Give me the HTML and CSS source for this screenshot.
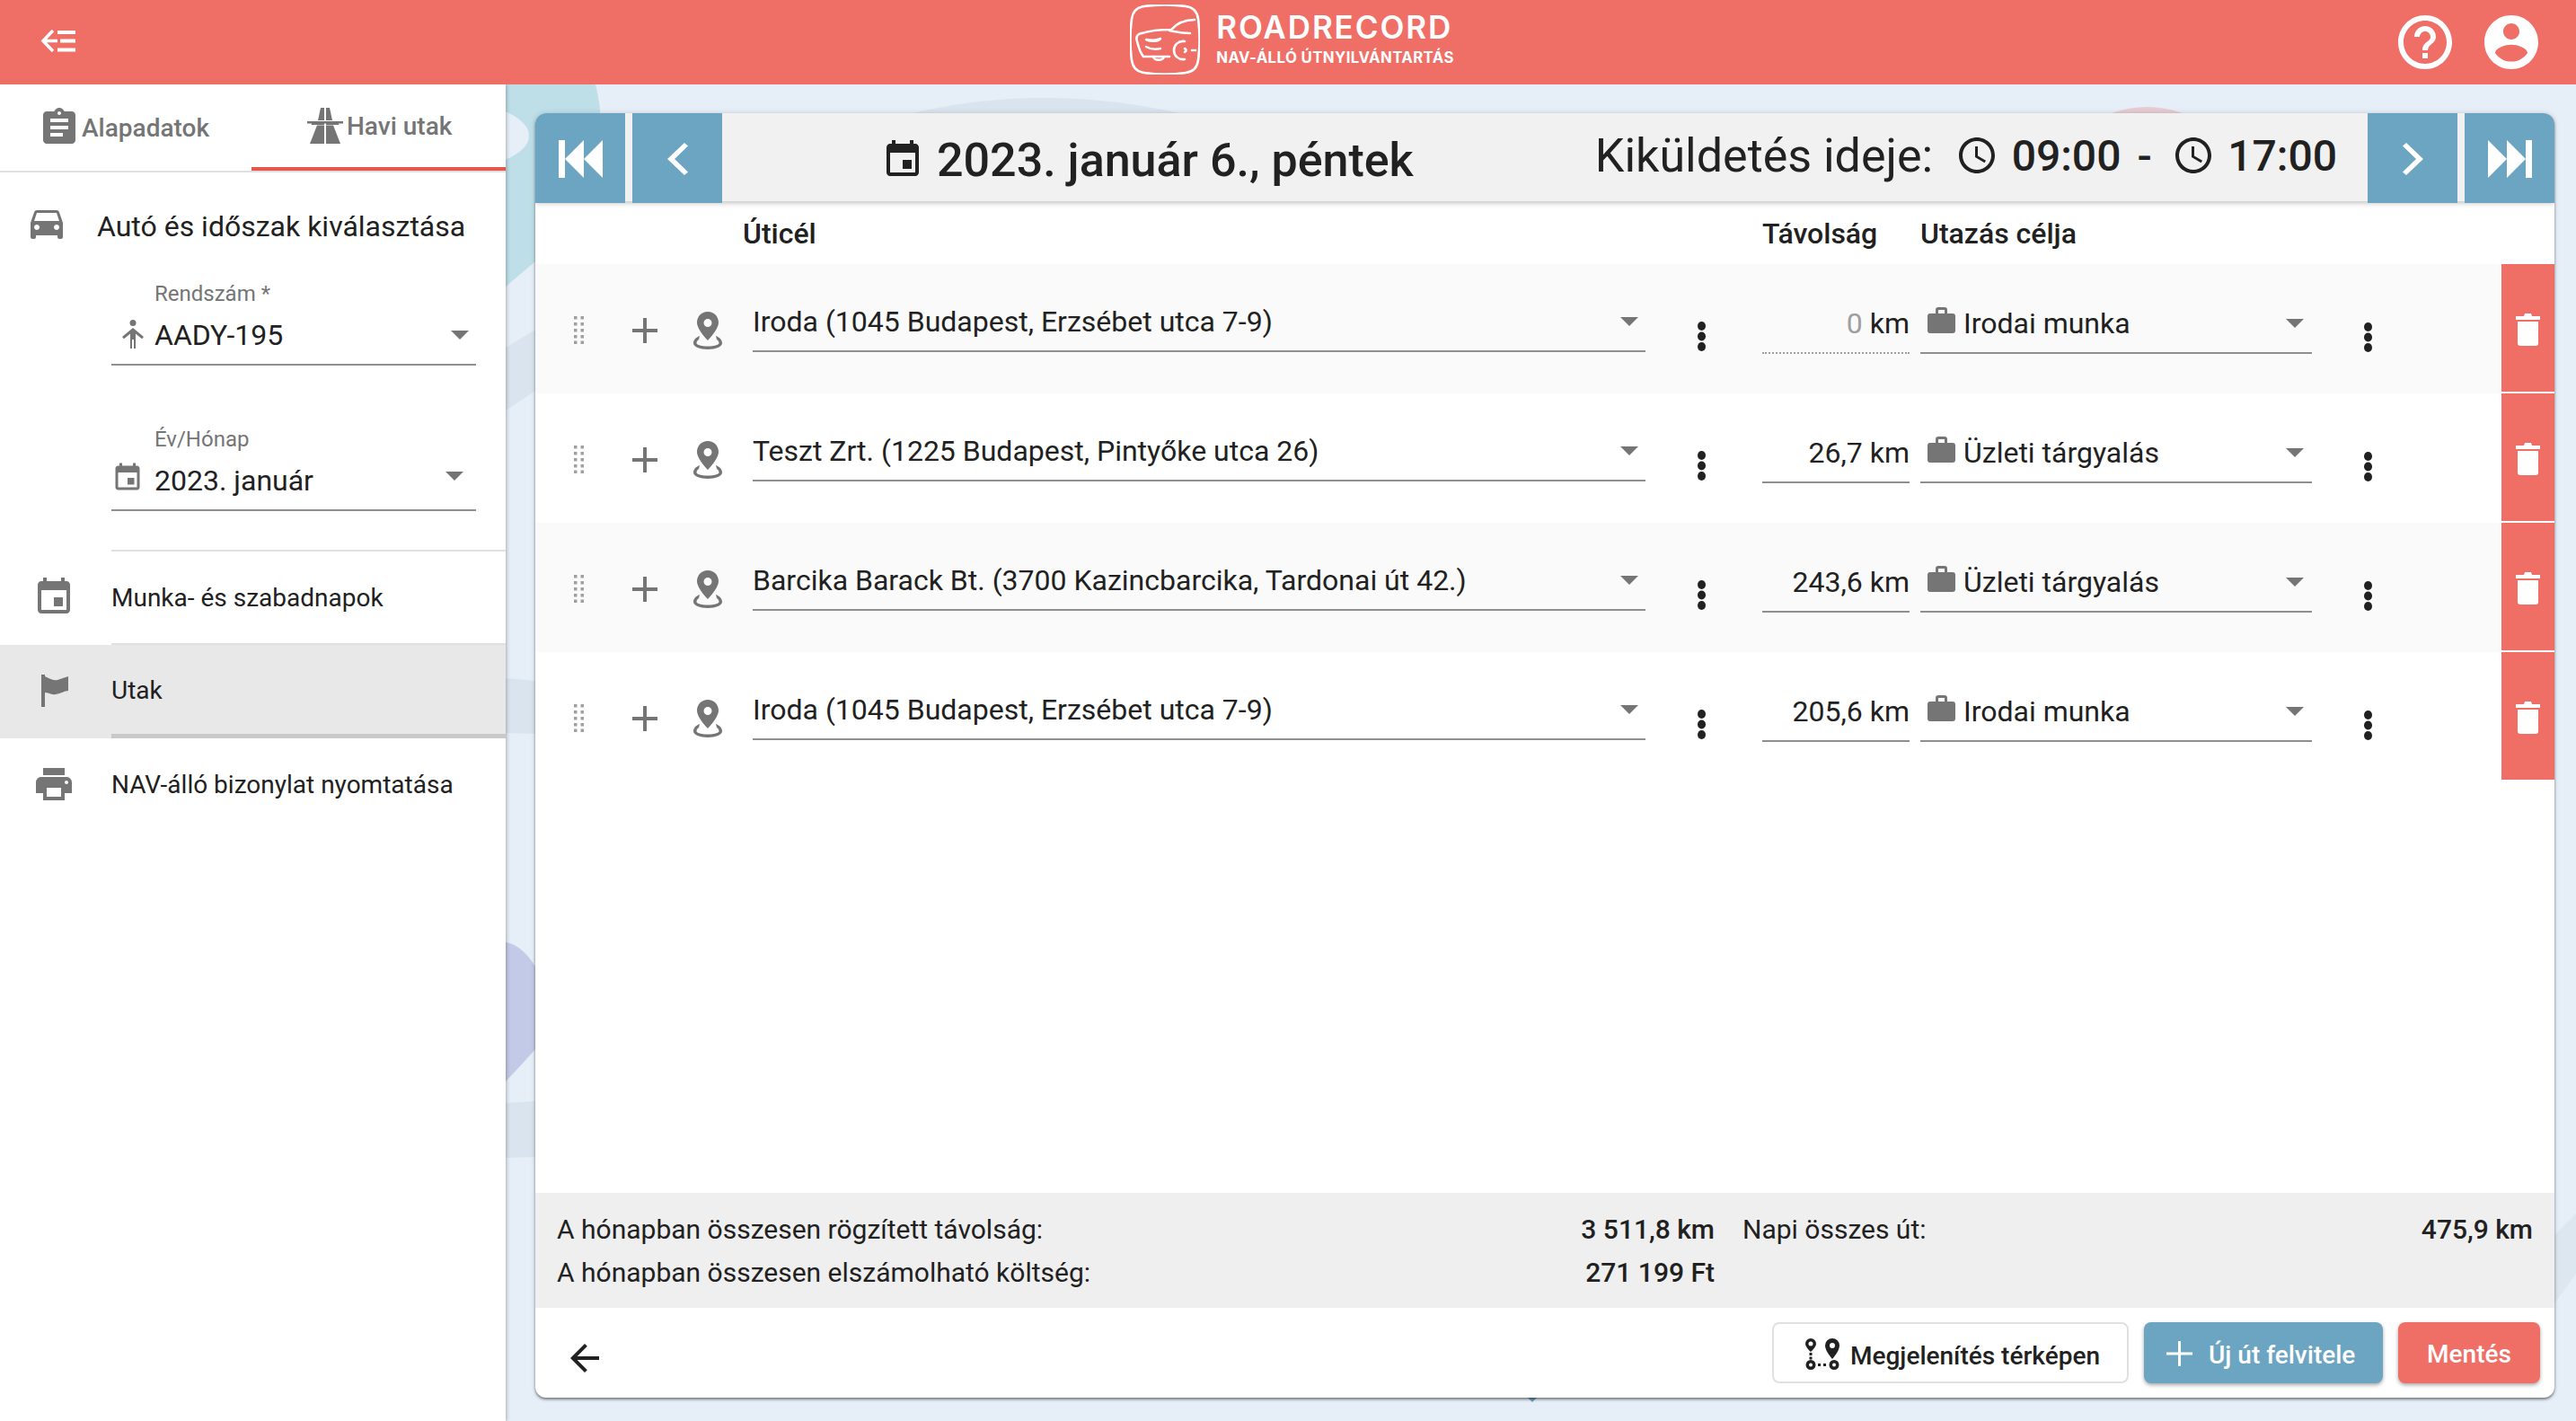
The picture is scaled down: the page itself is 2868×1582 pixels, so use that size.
FILE: index.html
```html
<!DOCTYPE html>
<html lang="hu">
<head>
<meta charset="utf-8">
<title>Roadrecord</title>
<link rel="stylesheet" href="styles.css">
</head>
<body>
<svg class="sprite" aria-hidden="true">
  <symbol id="i-event" viewBox="0 0 24 24"><path d="M17 12h-5v5h5v-5zM16 1v2H8V1H6v2H5c-1.11 0-1.99.9-1.99 2L3 19c0 1.1.89 2 2 2h14c1.1 0 2-.9 2-2V5c0-1.1-.9-2-2-2h-1V1h-2zm3 18H5V8h14v11z"/></symbol>
  <symbol id="i-clock" viewBox="0 0 24 24"><path d="M11.99 2C6.47 2 2 6.48 2 12s4.47 10 9.99 10C17.52 22 22 17.52 22 12S17.52 2 11.99 2zM12 20c-4.42 0-8-3.58-8-8s3.58-8 8-8 8 3.58 8 8-3.58 8-8 8zm.5-13H11v6l5.25 3.15.75-1.23-4.5-2.67z"/></symbol>
  <symbol id="i-case" viewBox="0 0 31 29"><rect x="0" y="7" width="31" height="22" rx="3"/><path d="M9 8V3a3 3 0 0 1 3-3h7a3 3 0 0 1 3 3v5h-3V3h-7v5z"/></symbol>
  <symbol id="i-pin" viewBox="0 0 32 42"><path fill-rule="evenodd" d="M16 0C9 0 4 5.500 4 12c0 8 12 20 12 20s12-12 12-20C28 5.500 23 0 16 0zm0 8a4.500 4.500 0 1 1 0 9 4.500 4.500 0 0 1 0-9z"/><path d="M7 27C2 29 0 32 0 35c0 4 7 7 16 7s16-3 16-7c0-3-2-6-7-8l1 4c2 1 2.500 3 2.500 4 0 2-6 3.500-12.500 3.500S3.500 37 3.500 35c0-1 .5-3 2.500-4z"/></symbol>
  <symbol id="i-drag" viewBox="0 0 11 31"><g fill="#a0a0a0"><rect x="0" y="0" width="3.500" height="3.500"/><rect x="7.500" y="0" width="3.500" height="3.500"/><rect x="0" y="7" width="3.500" height="3.500"/><rect x="7.500" y="7" width="3.500" height="3.500"/><rect x="0" y="14" width="3.500" height="3.500"/><rect x="7.500" y="14" width="3.500" height="3.500"/><rect x="0" y="21" width="3.500" height="3.500"/><rect x="7.500" y="21" width="3.500" height="3.500"/><rect x="0" y="27.500" width="3.500" height="3.500"/><rect x="7.500" y="27.500" width="3.500" height="3.500"/></g></symbol>
  <symbol id="i-plus" viewBox="0 0 28 28"><path d="M12 0h4v12h12v4H16v12h-4V16H0v-4h12z"/></symbol>
  <symbol id="i-more" viewBox="0 0 11 33"><ellipse cx="5.500" cy="5" rx="4.500" ry="5"/><ellipse cx="5.500" cy="16.500" rx="4.500" ry="5"/><ellipse cx="5.500" cy="28" rx="4.500" ry="5"/></symbol>
  <symbol id="i-trash" viewBox="0 0 27 36"><path d="M10 0h7l1 3h9v4H0V3h9z"/><path d="M2 9h23v24a3 3 0 0 1-3 3H5a3 3 0 0 1-3-3z"/></symbol>
</svg>

<header class="topbar">
  <svg class="menu-back" viewBox="0 0 39 25"><path d="M14 1 3 12.500 14 24M3 12.500h16" fill="none" stroke="#fff" stroke-width="3.500"/><path d="M19 1h20v4H19zM22 10.500h17v4H22zM19 20.500h20v4H19z" fill="#fff"/></svg>
  <div class="brand">
    <svg class="brand-mark" viewBox="0 0 78 78" stroke="#fff" stroke-width="2.600" stroke-linecap="round" stroke-linejoin="round">
      <path d="M16 2c15-2 31-2 46 0 8 1 13 6 14 14 2 15 2 31 0 46-1 8-6 13-14 14-15 2-31 2-46 0-8-1-13-6-14-14-2-15-2-31 0-46C3 8 8 3 16 2z"/>
      <path d="M72 17c-11 0-19 3-26 11-12 0-25 1-36 5-3 2-3 5-2 8 2 8 4 14 7 17l29 0"/>
      <path d="M44 29c9 2 18 3 23 3"/>
      <path d="M18 39c6 1 12 1 16-1-2 3-10 4-16 1zM18 47c5 3 12 3 16 2M26 58c1 5 11 5 12 0"/>
      <path d="M61 41c-7-1-12 4-12 10s5 11 12 10M61 49c2 1 2 3 0 4M69 51h4"/>
    </svg>
    <div class="brand-text">
      <div class="brand-name">ROADRECORD</div>
      <div class="brand-sub">NAV-ÁLLÓ ÚTNYILVÁNTARTÁS</div>
    </div>
  </div>
  <div class="top-actions">
    <svg class="top-icon" viewBox="0 0 24 24"><path d="M11 18h2v-2h-2v2zm1-16C6.480 2 2 6.480 2 12s4.480 10 10 10 10-4.480 10-10S17.520 2 12 2zm0 18c-4.410 0-8-3.590-8-8s3.590-8 8-8 8 3.590 8 8-3.590 8-8 8zm0-14c-2.210 0-4 1.790-4 4h2c0-1.100.9-2 2-2s2 .9 2 2c0 2-3 1.750-3 5h2c0-2.250 3-2.500 3-5 0-2.210-1.790-4-4-4z"/></svg>
    <svg class="top-icon" viewBox="0 0 24 24"><path d="M12 2C6.480 2 2 6.480 2 12s4.480 10 10 10 10-4.480 10-10S17.520 2 12 2zm0 3c1.660 0 3 1.340 3 3s-1.340 3-3 3-3-1.340-3-3 1.340-3 3-3zm0 14.200c-2.500 0-4.710-1.280-6-3.220.03-1.990 4-3.080 6-3.080 1.990 0 5.970 1.090 6 3.080-1.290 1.940-3.500 3.220-6 3.220z"/></svg>
  </div>
</header>

<div class="workspace">
  <aside class="sidebar">
    <nav class="tabs">
      <div class="tab tab-first">
        <svg class="icon-48 gray" viewBox="0 0 24 24"><path d="M19 3h-4.180C14.400 1.840 13.300 1 12 1c-1.300 0-2.400.84-2.820 2H5c-1.100 0-2 .9-2 2v14c0 1.100.9 2 2 2h14c1.100 0 2-.9 2-2V5c0-1.100-.9-2-2-2zm-7 0c.55 0 1 .45 1 1s-.45 1-1 1-1-.45-1-1 .45-1 1-1zm2 14H7v-2h7v2zm3-4H7v-2h10v2zm0-4H7V7h10v2z"/></svg>
        <span>Alapadatok</span>
      </div>
      <div class="tab tab-active">
        <svg class="icon-road gray" viewBox="0 0 40 40"><path d="M15 0h4v14h-7zM21 0h4l3 14h-7zM0 15h40v2.500h-5l.4 1.500H21v-1.500h-2V19H4.600l.4-1.500H0zM11 19.500h8V40H3zM21 19.500h8L37 40H21z"/></svg>
        <span>Havi utak</span>
      </div>
    </nav>

    <div class="section-title">
      <svg class="icon-48 gray" viewBox="0 0 24 24"><path d="M18.920 6.010C18.720 5.420 18.160 5 17.500 5h-11c-.66 0-1.210.42-1.420 1.010L3 12v8c0 .55.45 1 1 1h1c.55 0 1-.45 1-1v-1h12v1c0 .55.45 1 1 1h1c.55 0 1-.45 1-1v-8l-2.080-5.990zM6.500 16c-.83 0-1.500-.67-1.500-1.500S5.670 13 6.500 13s1.500.67 1.500 1.500S7.330 16 6.500 16zm11 0c-.83 0-1.500-.67-1.500-1.500s.67-1.500 1.500-1.500 1.500.67 1.500 1.500-.67 1.500-1.500 1.500zM5 11l1.500-4.500h11L19 11H5z"/></svg>
      <span>Autó és időszak kiválasztása</span>
    </div>

    <div class="side-field side-field-plate">
      <div class="side-label">Rendszám *</div>
      <div class="side-value">
        <svg class="icon-person gray" viewBox="0 0 24 32"><circle cx="12" cy="3.500" r="3.500"/><path d="M12 9l12 10-2 2.200-7-5.700V32h-2V22h-2v10H9V15.500l-7 5.700L0 19z"/></svg>
        <span>AADY-195</span>
        <i class="caret caret-plate"></i>
      </div>
    </div>

    <div class="side-field side-field-month">
      <div class="side-label">Év/Hónap</div>
      <div class="side-value">
        <svg class="icon-36 gray lift" viewBox="0 0 24 24"><use href="#i-event"/></svg>
        <span>2023. január</span>
        <i class="caret caret-month"></i>
      </div>
    </div>

    <div class="side-divider"></div>
    <div class="menu-item">
      <svg class="icon-48 gray" viewBox="0 0 24 24"><use href="#i-event"/></svg>
      <span>Munka- és szabadnapok</span>
    </div>
    <div class="side-divider side-divider-tight"></div>
    <div class="menu-item menu-item-selected">
      <svg class="icon-flag gray" viewBox="0 0 30 36"><path d="M0 0h4v2c5 2 8 5 14 4 4-1 8-3 12-4v16c-4 0-8 3-14 4-5 1-8-2-12-2v16H0z"/></svg>
      <span>Utak</span>
    </div>
    <div class="menu-item">
      <svg class="icon-48 gray" viewBox="0 0 24 24"><path d="M19 8H5c-1.660 0-3 1.340-3 3v6h4v4h12v-4h4v-6c0-1.660-1.340-3-3-3zm-3 11H8v-5h8v5zm3-7c-.55 0-1-.45-1-1s.45-1 1-1 1 .45 1 1-.45 1-1 1zm-1-9H6v4h12V3z"/></svg>
      <span>NAV-álló bizonylat nyomtatása</span>
    </div>
  </aside>

  <main class="stage">
    <svg class="backdrop" viewBox="563 94 2305 1488" preserveAspectRatio="none" aria-hidden="true">
      <path fill="#bedfe8" d="M563 94h100q27 106-67 197l-33 28z"/>
      <ellipse fill="#e6eef8" cx="500" cy="151" rx="89" ry="38"/>
      <path fill="#d9e4ee" d="M563 387l33-20v68l-33 22z"/>
      <path fill="#d9e4ee" d="M563 755l33 3v59l-33-1z"/>
      <path fill="#c3cae8" d="M563 1049q18 3 33 27v92q-15 17-33 36z"/>
      <path fill="#d9e4ee" d="M563 1228l33-2v62l-33 1z"/>
      <path fill="#dde7f0" d="M2844 1375l24-24v67l-24 33z"/>
      <path fill="#d9e4ee" d="M1016 126q144-34 298 0z"/>
      <path fill="#e6ccd3" d="M2351 126q39-14 79 0z"/>
      <path fill="#6ca5c1" d="M1701 1556h10l-5 5z"/>
    </svg>

    <section class="card">
      <div class="toolbar">
        <button class="nav-btn nav-btn-first"><svg class="nav-skip" viewBox="0 0 49 42"><path d="M0 0h7v42H0zM7 21 28 0v42zM28 21 49 0v42z"/></svg></button>
        <button class="nav-btn"><svg class="nav-chevron" viewBox="0 0 23 36"><path d="M19 0l4 3.500L8 18l15 14.500-4 3.500L0 18z"/></svg></button>
        <div class="day">
          <svg class="icon-48" viewBox="0 0 24 24"><use href="#i-event"/></svg>
          <span>2023. január 6., péntek</span>
        </div>
        <div class="period">
          <span class="period-label">Kiküldetés ideje:</span>
          <svg class="icon-48" viewBox="0 0 24 24"><use href="#i-clock"/></svg>
          <span class="period-time">09:00</span>
          <span class="period-time period-dash">-</span>
          <svg class="icon-48" viewBox="0 0 24 24"><use href="#i-clock"/></svg>
          <span class="period-time">17:00</span>
        </div>
        <button class="nav-btn"><svg class="nav-chevron" viewBox="0 0 23 36"><path d="M4 0 0 3.500 15 18 0 32.500 4 36l19-18z"/></svg></button>
        <button class="nav-btn nav-btn-last"><svg class="nav-skip" viewBox="0 0 49 42"><path d="M42 0h7v42h-7zM42 21 21 0v42zM21 21 0 0v42z"/></svg></button>
      </div>

      <div class="col-heads">
        <span class="col-dest">Úticél</span>
        <span>Távolság</span>
        <span>Utazás célja</span>
      </div>

      <div class="trip trip-odd">
        <svg class="trip-drag"><use href="#i-drag"/></svg>
        <svg class="trip-plus"><use href="#i-plus"/></svg>
        <svg class="trip-pin"><use href="#i-pin"/></svg>
        <div class="field field-dest"><span>Iroda (1045 Budapest, Erzsébet utca 7-9)</span><i class="caret"></i></div>
        <svg class="trip-more trip-more-dest"><use href="#i-more"/></svg>
        <div class="field field-dist field-dotted"><span><span class="zero">0</span> km</span></div>
        <div class="field field-purpose"><svg class="case"><use href="#i-case"/></svg><span>Irodai munka</span><i class="caret"></i></div>
        <svg class="trip-more trip-more-purpose"><use href="#i-more"/></svg>
        <div class="trip-delete"><svg class="trash"><use href="#i-trash"/></svg></div>
      </div>

      <div class="trip">
        <svg class="trip-drag"><use href="#i-drag"/></svg>
        <svg class="trip-plus"><use href="#i-plus"/></svg>
        <svg class="trip-pin"><use href="#i-pin"/></svg>
        <div class="field field-dest"><span>Teszt Zrt. (1225 Budapest, Pintyőke utca 26)</span><i class="caret"></i></div>
        <svg class="trip-more trip-more-dest"><use href="#i-more"/></svg>
        <div class="field field-dist"><span>26,7 km</span></div>
        <div class="field field-purpose"><svg class="case"><use href="#i-case"/></svg><span>Üzleti tárgyalás</span><i class="caret"></i></div>
        <svg class="trip-more trip-more-purpose"><use href="#i-more"/></svg>
        <div class="trip-delete"><svg class="trash"><use href="#i-trash"/></svg></div>
      </div>

      <div class="trip trip-odd">
        <svg class="trip-drag"><use href="#i-drag"/></svg>
        <svg class="trip-plus"><use href="#i-plus"/></svg>
        <svg class="trip-pin"><use href="#i-pin"/></svg>
        <div class="field field-dest"><span>Barcika Barack Bt. (3700 Kazincbarcika, Tardonai út 42.)</span><i class="caret"></i></div>
        <svg class="trip-more trip-more-dest"><use href="#i-more"/></svg>
        <div class="field field-dist"><span>243,6 km</span></div>
        <div class="field field-purpose"><svg class="case"><use href="#i-case"/></svg><span>Üzleti tárgyalás</span><i class="caret"></i></div>
        <svg class="trip-more trip-more-purpose"><use href="#i-more"/></svg>
        <div class="trip-delete"><svg class="trash"><use href="#i-trash"/></svg></div>
      </div>

      <div class="trip">
        <svg class="trip-drag"><use href="#i-drag"/></svg>
        <svg class="trip-plus"><use href="#i-plus"/></svg>
        <svg class="trip-pin"><use href="#i-pin"/></svg>
        <div class="field field-dest"><span>Iroda (1045 Budapest, Erzsébet utca 7-9)</span><i class="caret"></i></div>
        <svg class="trip-more trip-more-dest"><use href="#i-more"/></svg>
        <div class="field field-dist"><span>205,6 km</span></div>
        <div class="field field-purpose"><svg class="case"><use href="#i-case"/></svg><span>Irodai munka</span><i class="caret"></i></div>
        <svg class="trip-more trip-more-purpose"><use href="#i-more"/></svg>
        <div class="trip-delete"><svg class="trash"><use href="#i-trash"/></svg></div>
      </div>

      <div class="filler"></div>

      <div class="summary">
        <div class="sum-cell"><span>A hónapban összesen rögzített távolság:</span><b>3 511,8 km</b></div>
        <div class="sum-cell"><span>Napi összes út:</span><b>475,9 km</b></div>
        <div class="sum-cell"><span>A hónapban összesen elszámolható költség:</span><b>271 199 Ft</b></div>
      </div>

      <div class="actions">
        <svg class="icon-48 back" viewBox="0 0 24 24"><path d="M20 11H7.830l5.590-5.590L12 4l-8 8 8 8 1.410-1.410L7.830 13H20v-2z"/></svg>
        <button class="btn btn-map">
          <svg class="route" viewBox="0 0 38 35"><path fill-rule="evenodd" d="M6 0a6 6 0 0 1 6 6c0 4-6 9-6 9S0 10 0 6a6 6 0 0 1 6-6zm0 3.500a2.500 2.500 0 1 0 0 5 2.500 2.500 0 0 0 0-5zM30 0a8 8 0 0 1 8 8c0 6-8 15-8 15s-8-9-8-15a8 8 0 0 1 8-8zm0 5a3 3 0 1 0 0 6 3 3 0 0 0 0-6zM6 24a5.500 5.500 0 1 1 0 11 5.500 5.500 0 0 1 0-11zm0 3.500a2 2 0 1 0 0 4 2 2 0 0 0 0-4zM32 24a5.500 5.500 0 1 1 0 11 5.500 5.500 0 0 1 0-11zm0 3.500a2 2 0 1 0 0 4 2 2 0 0 0 0-4z"/><path d="M4.500 16h3v3h-3zM4.500 20.500h3v3h-3zM14 28h3v3h-3zM20 28h3v3h-3z"/></svg>
          <span>Megjelenítés térképen</span>
        </button>
        <button class="btn btn-new">
          <svg class="btn-plus" viewBox="0 0 29 28"><path d="M13 0h3v12.500h13v3H16V28h-3V15.500H0v-3h13z"/></svg>
          <span>Új út felvitele</span>
        </button>
        <button class="btn btn-save">Mentés</button>
      </div>
    </section>
  </main>
</div>
</body>
</html>
```
FILE: styles.css
```css
* { box-sizing: border-box; }
html, body { margin: 0; padding: 0; }
body {
  width: 2868px;
  height: 1582px;
  overflow: hidden;
  display: flex;
  flex-direction: column;
  font-family: Roboto, "Liberation Sans", sans-serif;
  font-size: 32px;
  color: #212121;
  background: #e6eef8;
}
.sprite { display: none; }
svg { display: block; flex: none; fill: currentColor; }
.gray { color: #757575; }
.icon-48 { width: 48px; height: 48px; }
.icon-36 { width: 36px; height: 36px; }

/* top bar */
.topbar {
  height: 94px;
  flex: none;
  background: #ef6e66;
  display: grid;
  grid-template-columns: 1fr auto 1fr;
  align-items: center;
  padding: 0 36px 0 45px;
  color: #fff;
  position: relative;
  z-index: 3;
}
.menu-back { width: 39px; height: 25px; margin-top: -3px; }
.brand { display: flex; align-items: center; gap: 18px; }
.brand-mark { width: 78px; height: 78px; margin-top: -7px; fill: none; }
.brand-text { display: flex; flex-direction: column; margin-top: -6px; }
.brand-name {
  font-family: Inter, sans-serif;
  font-weight: 600;
  font-size: 35px;
  line-height: 36px;
  letter-spacing: 1.900px;
}
.brand-sub {
  font-family: Inter, sans-serif;
  font-weight: 700;
  font-size: 16.800px;
  line-height: 24px;
  letter-spacing: .4px;
  margin-top: 4px;
}
.top-actions { display: flex; justify-content: flex-end; gap: 24px; align-items: center; }
.top-icon { width: 72px; height: 72px; }

/* layout */
.workspace { flex: 1; display: flex; min-height: 0; }
.sidebar {
  width: 563px;
  flex: none;
  background: #fff;
  box-shadow: 1px 0 4px rgba(0, 0, 0, .28);
  position: relative;
  z-index: 2;
}
.stage {
  flex: 1;
  position: relative;
  padding: 32px 24px 26px 33px;
  display: flex;
}
.backdrop { position: absolute; inset: 0; width: 100%; height: 100%; }

/* sidebar tabs */
.tabs {
  height: 98px;
  display: grid;
  grid-template-columns: 280px 1fr;
  border-bottom: 2px solid #e0e0e0;
}
.tab {
  display: flex;
  align-items: center;
  height: 96px;
  font-size: 28px;
  font-weight: 500;
  color: #757575;
}
.tab-first { padding-left: 42px; gap: 1px; }
.tab-active { padding-left: 62px; gap: 4px; border-bottom: 4px solid #e8564a; }
.icon-road { width: 40px; height: 40px; }

/* sidebar content */
.section-title {
  display: flex;
  align-items: flex-start;
  margin-top: 32px;
  padding-left: 28px;
  gap: 32px;
  font-size: 32px;
  line-height: 40px;
}
.section-title span { margin-top: 8px; }
.side-field { margin-left: 124px; width: 406px; }
.side-field-plate { margin-top: 39px; }
.side-field-month { margin-top: 66px; }
.side-label {
  padding-left: 48px;
  font-size: 24px;
  line-height: 32px;
  color: #757575;
}
.side-value {
  height: 64px;
  display: flex;
  align-items: center;
  gap: 12px;
  padding-bottom: 3px;
  border-bottom: 2px solid #8f8f8f;
  font-size: 32px;
}
.icon-person { width: 24px; height: 32px; margin-left: 12px; margin-top: -1px; }
.lift { margin-top: -5px; }
.caret {
  display: block;
  flex: none;
  margin-left: auto;
  width: 0;
  height: 0;
  border-left: 10.500px solid transparent;
  border-right: 10.500px solid transparent;
  border-top: 10.500px solid #757575;
}
.caret-plate { margin-right: 8px; }
.caret-month { margin-right: 14px; margin-top: -9px; }
.side-divider { height: 2px; margin: 43px 0 0 124px; background: #e0e0e0; }
.side-divider-tight { margin-top: 0; }
.menu-item {
  height: 102px;
  display: flex;
  align-items: center;
  padding-left: 36px;
  gap: 40px;
  font-size: 28px;
}
.menu-item-selected {
  height: 104px;
  padding: 0 0 3px 46px;
  gap: 48px;
  background: linear-gradient(#c9c9c9, #c9c9c9) no-repeat 124px 99px / 100% 5px, #e8e8e8;
}
.icon-flag { width: 30px; height: 36px; }

/* card */
.card {
  flex: 1;
  position: relative;
  display: flex;
  flex-direction: column;
  background: #fff;
  border-radius: 12px;
  box-shadow: 0 2px 3px rgba(0, 0, 0, .45), 0 0 6px rgba(0, 0, 0, .12);
  overflow: hidden;
}
.toolbar {
  height: 98px;
  flex: none;
  display: flex;
  background: #f1f1f1;
  box-shadow: 0 2px 6px rgba(0, 0, 0, .25);
  position: relative;
  z-index: 1;
}
.nav-btn {
  width: 100px;
  height: 100px;
  flex: none;
  border: 0;
  padding: 2px 0 0;
  background: #6ca5c1;
  color: #fff;
  display: flex;
  align-items: center;
  justify-content: center;
}
.nav-btn + .nav-btn { margin-left: 8px; }
.nav-skip { width: 49px; height: 42px; }
.nav-chevron { width: 23px; height: 36px; }
.day {
  display: flex;
  align-items: center;
  gap: 14px;
  margin: 6px 0 0 177px;
  font-size: 52px;
  font-weight: 500;
}
.period {
  display: flex;
  align-items: center;
  margin: 0 34px 4px auto;
  font-size: 52px;
  white-space: nowrap;
}
.period-label { margin-right: 25px; }
.period-time { font-weight: 500; font-size: 48px; margin-left: 14.500px; }
.period-dash { margin: 0 22px 0 18px; }

.col-heads {
  height: 70px;
  flex: none;
  padding-top: 2px;
  display: grid;
  grid-template-columns: 1366px 176px 1fr;
  align-items: center;
  font-weight: 500;
  font-size: 32px;
}
.col-dest { padding-left: 231px; }

/* trip rows */
.trip {
  height: 144px;
  flex: none;
  display: grid;
  grid-template-columns: 108px 68px 66px 994px 130px 164px 12px 436px 211px 59px;
  align-items: start;
}
.trip-odd { background: #fafafa; }
.trip-drag { width: 11px; height: 31px; margin: 58px 0 0 43px; grid-column: 1; }
.trip-plus { width: 28px; height: 28px; margin-top: 60px; color: #757575; }
.trip-pin { width: 32px; height: 42px; margin-top: 53px; color: #757575; }
.field {
  display: flex;
  align-items: center;
  height: 66px;
  border-bottom: 2px solid #8f8f8f;
  white-space: nowrap;
}
.field-dest { margin-top: 32px; }
.field-dest .caret { margin-right: 8px; }
.trip-more { width: 11px; height: 33px; }
.trip-more-dest { margin: 64px 0 0 57px; }
.field-dist { margin-top: 34px; justify-content: flex-end; grid-column: 6; }
.field-dotted { border-bottom: 2px dotted #9e9e9e; }
.zero { color: #9e9e9e; }
.field-purpose { margin-top: 34px; padding-left: 8px; gap: 9px; grid-column: 8; }
.field-purpose .caret { margin-right: 9px; }
.case { width: 31px; height: 29px; margin-top: -8px; color: #757575; }
.trip-more-purpose { margin: 65px 0 0 57px; }
.trip-delete {
  height: 142px;
  background: #ef6e66;
  color: #fff;
  display: flex;
  justify-content: center;
  padding-top: 55px;
}
.trash { width: 27px; height: 36px; }
.filler { flex: 1; }

/* summary */
.summary {
  height: 128px;
  flex: none;
  background: #efefef;
  padding: 16px 24px 0;
  display: grid;
  grid-template-columns: 1289px 880px;
  grid-auto-rows: 48px;
  column-gap: 31px;
  align-items: center;
  font-size: 30px;
}
.sum-cell { display: flex; justify-content: space-between; white-space: nowrap; }
.sum-cell b { font-weight: 500; }

/* actions */
.actions {
  height: 100px;
  flex: none;
  display: flex;
  align-items: flex-start;
  padding: 16px 16px 0 31px;
  gap: 17px;
}
.back { margin: 16px auto 0 0; }
.btn {
  height: 68px;
  border-radius: 8px;
  border: 0;
  display: flex;
  align-items: center;
  font-family: inherit;
  font-size: 28px;
  font-weight: 500;
  white-space: nowrap;
}
.btn-map {
  width: 397px;
  padding: 6px 0 0 35px;
  gap: 12px;
  background: #fff;
  color: #212121;
  border: 2px solid #e0e0e0;
}
.route { width: 38px; height: 35px; margin-top: -4px; }
.btn-new {
  width: 266px;
  padding: 4px 0 0 25px;
  gap: 18px;
  background: #6ca5c1;
  color: #fff;
  box-shadow: 0 2px 4px rgba(0, 0, 0, .35);
}
.btn-plus { width: 29px; height: 28px; margin-top: -2px; }
.btn-save {
  width: 158px;
  padding: 2px 0 0;
  justify-content: center;
  background: #ef6e66;
  color: #fff;
  box-shadow: 0 2px 4px rgba(0, 0, 0, .35);
}
```
